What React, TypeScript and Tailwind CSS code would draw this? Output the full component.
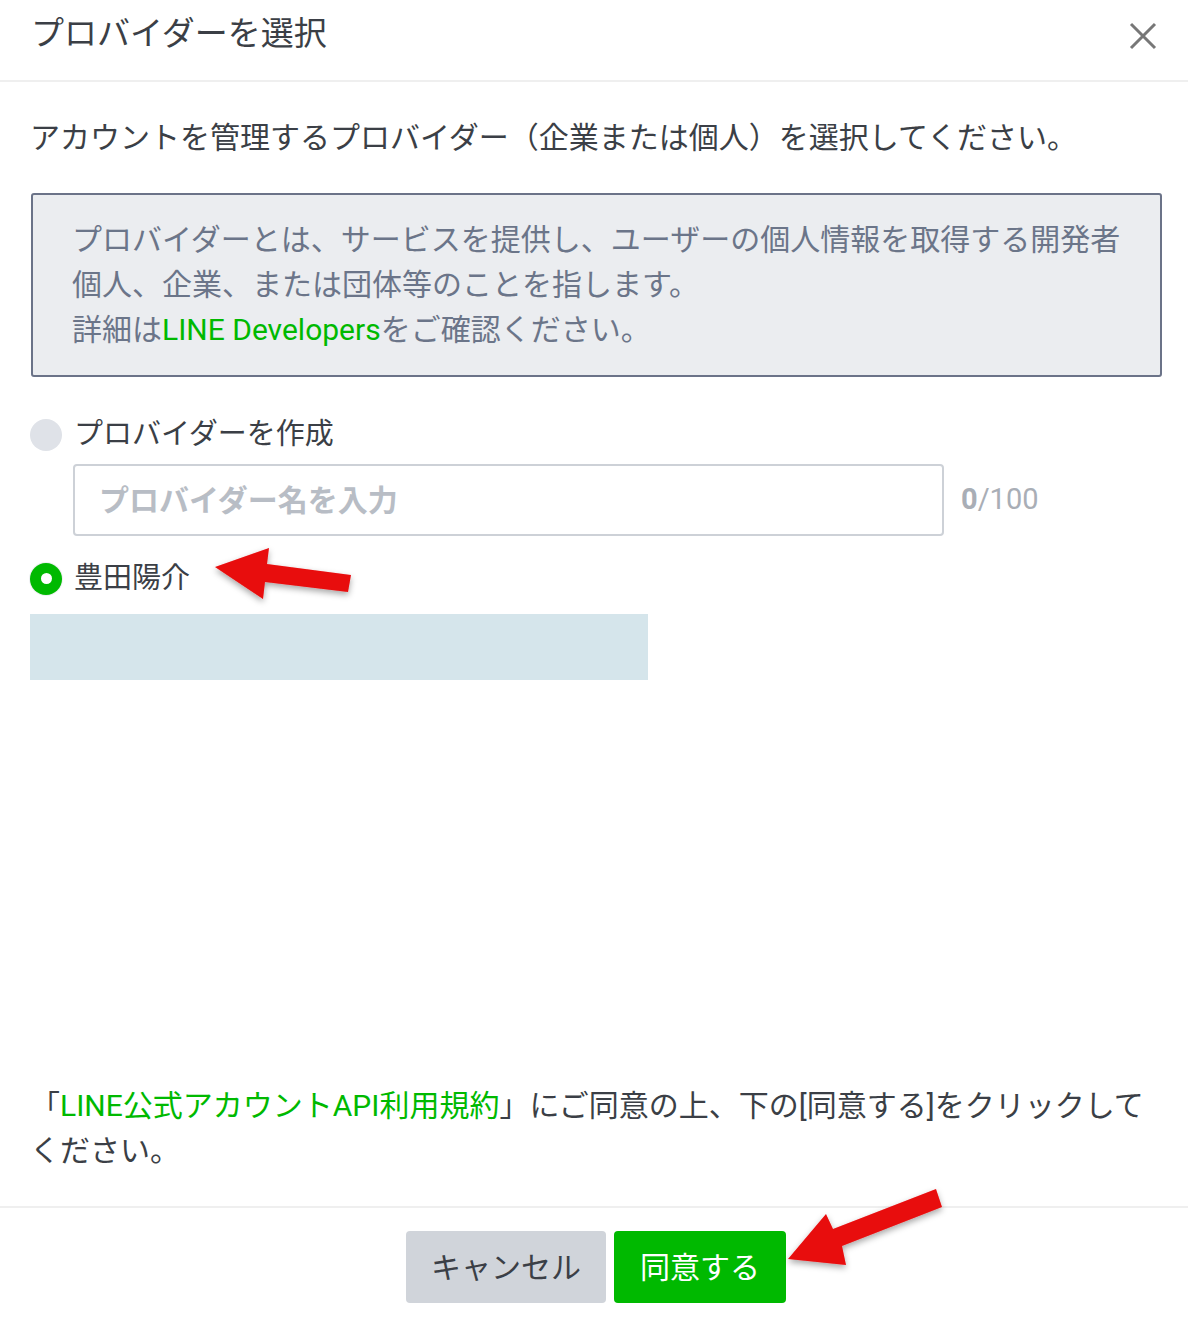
import React from "react";

const FONT = { fontFamily: 'Roboto, "Noto Sans CJK JP", sans-serif' };

export default function App() {
  return (
    <div
      className="relative w-[1188px] h-[1322px] bg-white flex flex-col text-[#3b3f46] overflow-hidden"
      style={FONT}
    >
      {/* Header */}
      <div className="h-[82px] shrink-0 border-b-2 border-[#efefef] flex items-start justify-between pl-[31px] pr-[30px] pt-[11px]">
        <div className="text-[33px] leading-[45px] text-[#3b3f46]">プロバイダーを選択</div>
        <button className="mt-[10px] w-[30px] h-[30px] flex items-center justify-center">
          <svg width="28" height="28" viewBox="0 0 28 28">
            <path d="M2 2 L26 26 M26 2 L2 26" stroke="#777" strokeWidth="3" />
          </svg>
        </button>
      </div>

      {/* Body */}
      <div className="flex-1 flex flex-col px-[30px]">
        <p className="mt-[33px] text-[30px] leading-[45px]">
          アカウントを管理するプロバイダー（企業または個人）を選択してください。
        </p>

        <div className="mt-[33px] ml-[1px] w-[1131px] border-2 border-[#6b7388] bg-[#ebedf0] rounded-[3px] pl-[39px] pr-[30px] pt-[22px] pb-[23px] text-[30px] leading-[45px] text-[#6b7589]">
          <p>プロバイダーとは、サービスを提供し、ユーザーの個人情報を取得する開発者個人、企業、または団体等のことを指します。</p>
          <p>
            詳細は<span className="text-[#00b900]">LINE Developers</span>をご確認ください。
          </p>
        </div>

        {/* Radio 1 */}
        <div className="mt-[35px] flex items-center h-[45px]">
          <span className="w-[32px] h-[32px] rounded-full bg-[#dfe2e8]" />
          <span className="ml-[12px] text-[29px] leading-[45px] text-[#3b3f46]">プロバイダーを作成</span>
        </div>

        <div className="mt-[7px] ml-[43px] flex items-center">
          <div className="w-[871px] h-[72px] border-2 border-[#cdd1d7] rounded-[4px] flex items-center pl-[24px]">
            <span className="text-[30px] font-bold text-[#b8bdc5]">プロバイダー名を入力</span>
          </div>
          <span className="ml-[17px] text-[29px] text-[#a9aeb6]">
            <span className="font-bold">0</span>/100
          </span>
        </div>

        {/* Radio 2 */}
        <div className="mt-[20px] flex items-center h-[45px]">
          <span className="w-[32px] h-[32px] rounded-full bg-[#00b900] flex items-center justify-center shadow-[0_0_0_1px_#eef0f2]">
            <span className="w-[11px] h-[11px] rounded-full bg-white" />
          </span>
          <span className="ml-[12px] text-[29px] leading-[45px] text-[#3b3f46]">豊田陽介</span>
        </div>

        <div className="mt-[13px] w-[618px] h-[66px] bg-[#d5e5eb]" />

        <div className="flex-1" />

        <p className="text-[30px] leading-[45px] pb-[33px]">
          「<span className="text-[#00b900]">LINE公式アカウントAPI利用規約</span>」にご同意の上、下の[同意する]をクリックしてください。
        </p>
      </div>

      {/* Footer */}
      <div className="h-[116px] shrink-0 border-t-2 border-[#efefef] flex justify-center pt-[23px] gap-[8px] pl-[4px]">
        <button className="w-[200px] h-[72px] rounded-[4px] bg-[#d0d4da] text-[30px] text-[#3b3f46]">
          キャンセル
        </button>
        <button className="w-[172px] h-[72px] rounded-[4px] bg-[#00b900] text-[30px] text-white">
          同意する
        </button>
      </div>

      {/* Annotation arrows */}
      <svg
        className="absolute inset-0 pointer-events-none"
        width="1188"
        height="1322"
        viewBox="0 0 1188 1322"
      >
        <defs>
          <filter id="sh" x="-20%" y="-20%" width="140%" height="160%">
            <feDropShadow dx="0" dy="3" stdDeviation="3" floodColor="#000" floodOpacity="0.35" />
          </filter>
        </defs>
        <polygon
          points="215,567 269,548 267,564 351,575 348,592 265,582 263,599"
          fill="#e8090a"
          filter="url(#sh)"
        />
        <polygon
          points="788,1259 826,1214 833,1229 936,1189 942,1207 842,1246 846,1265"
          fill="#e8090a"
          filter="url(#sh)"
        />
      </svg>
    </div>
  );
}
